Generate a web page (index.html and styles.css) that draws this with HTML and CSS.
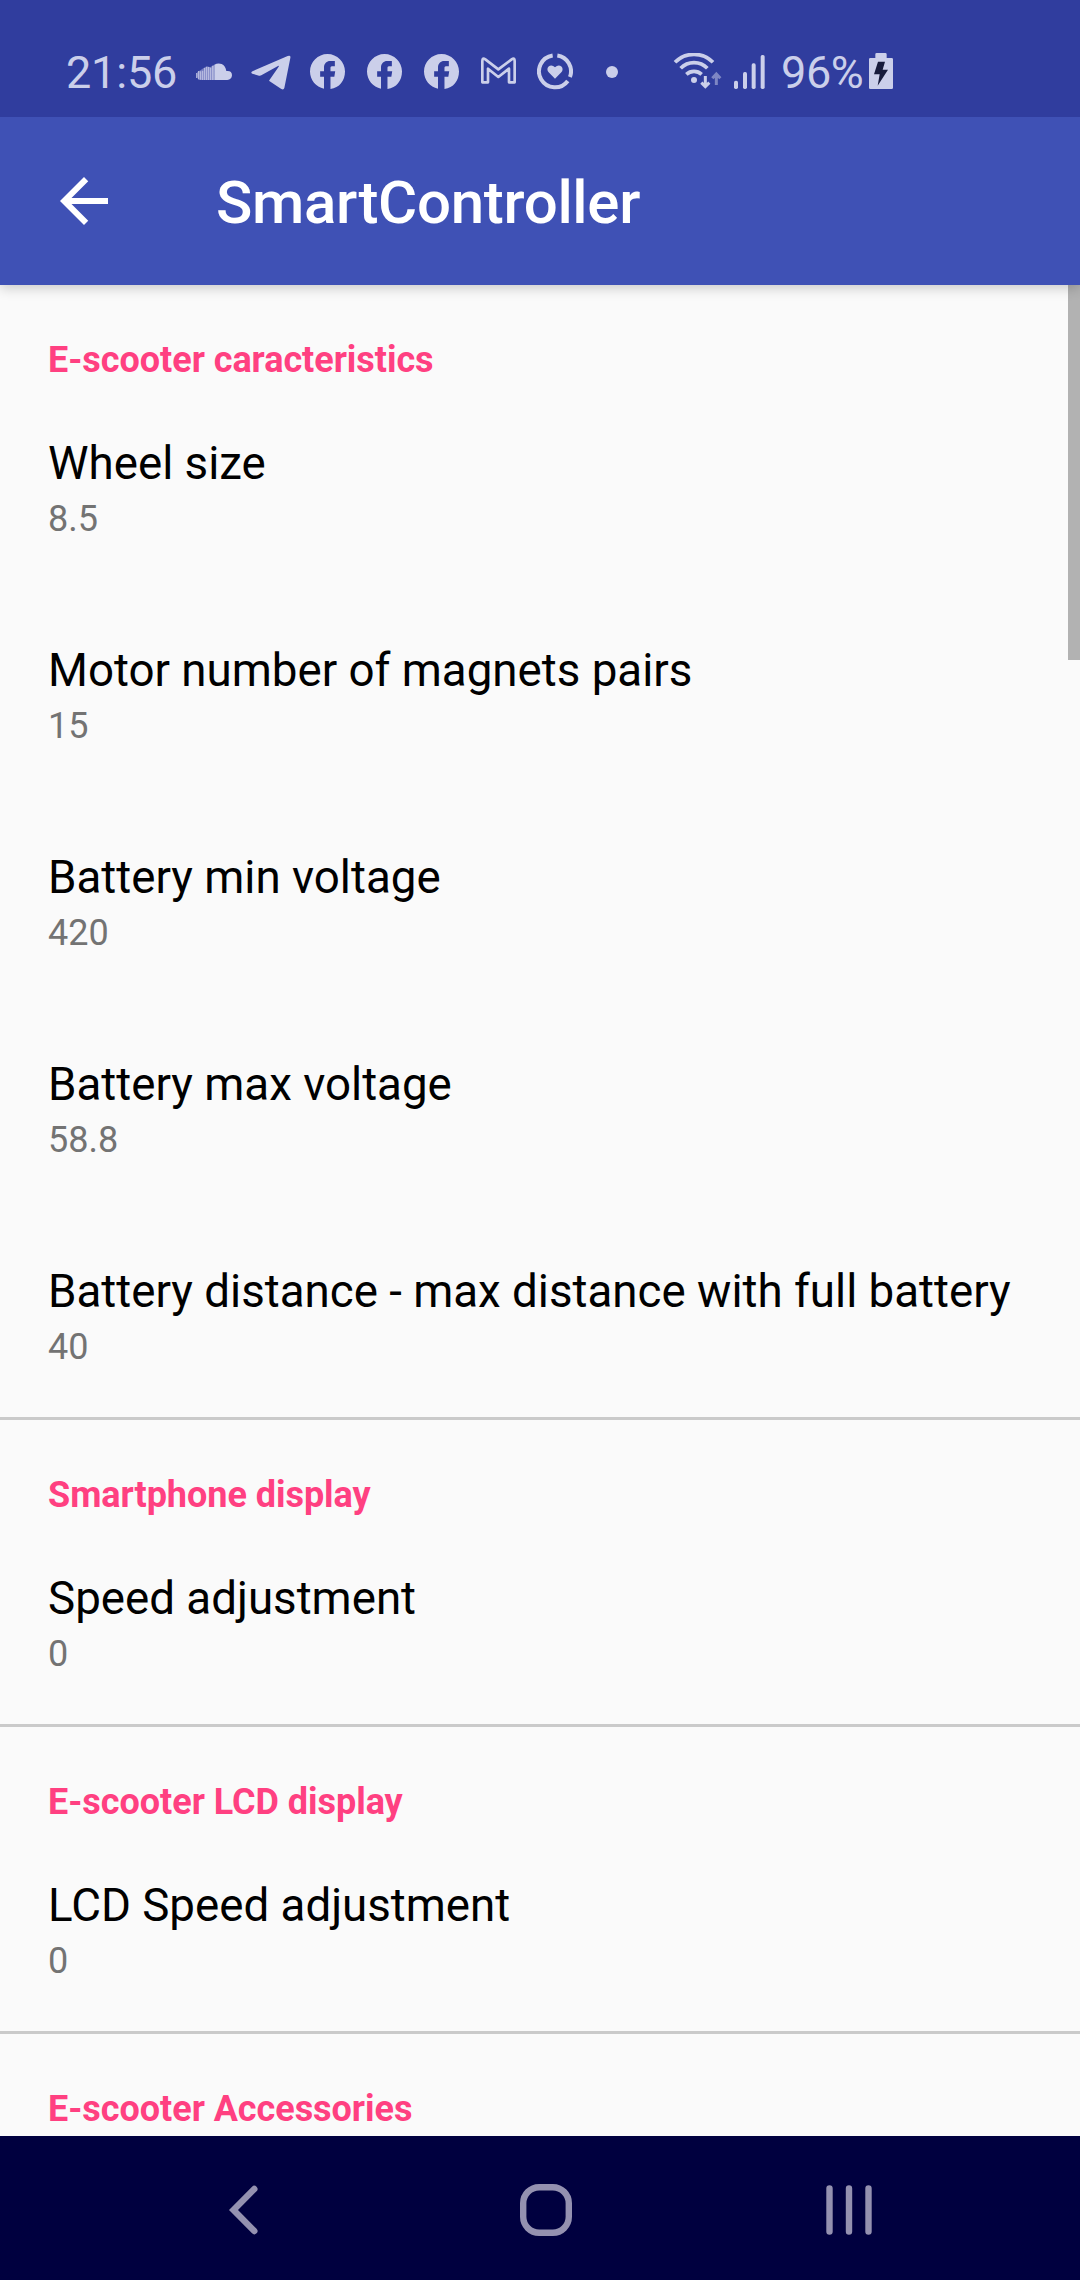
FILE: index.html
```html
<!DOCTYPE html>
<html lang="en">
<head>
<meta charset="utf-8">
<title>SmartController</title>
<link rel="stylesheet" href="styles.css">
</head>
<body>
<svg class="defs" width="0" height="0" aria-hidden="true">
  <symbol id="facebook" viewBox="2 2 20 20"><path d="M22 12c0-5.52-4.48-10-10-10S2 6.480 2 12c0 4.840 3.440 8.870 8 9.800V15H7.800v-3.200h2.200V9.500C10 7.570 11.570 6 13.500 6H16.200v3h-1.700c-.55 0-.8.450-.8 1v1.800h2.700l-.5 3.200h-2.200v6.950c5.050-.5 8.300-4.760 8.300-9.950z"/></symbol>
</svg>
<div class="screen">
  <header class="status-bar">
    <span class="clock">21:56</span>
    <svg class="icon soundcloud" width="36" height="37" viewBox="0 0 108 111">
      <path d="M55 35Q66 29 77 33Q88 38 91 54Q108 52 108 67Q107 80 94 81H55z"/>
      <path opacity=".75" d="M0 60h4v15h-4zM6 54h4v25h-4zM12 55h4v25h-4zM18 53h4v28h-4zM24 45h4v36h-4zM30 41h4v40h-4zM36 42h4v39h-4zM42 44h4v37h-4zM48 38h5v43h-5z"/>
      <path opacity=".45" d="M4 57Q16 50 24 44Q34 38 42 43L55 35V81H10Q0 77 4 57z"/>
    </svg>
    <svg class="icon telegram" width="40" height="37" viewBox="0 0 120 111">
      <path d="M1 60Q0 56 6 54L110 9Q120 6 118 15L100 105Q98 112 91 108L56 85Q53 83 56 80L83 41Q85 37 81 39L31 67Q28 69 24 68L4 62z"/>
    </svg>
    <svg class="icon fb-first" width="35" height="35"><use href="#facebook"/></svg>
    <svg class="icon fb" width="35" height="35"><use href="#facebook"/></svg>
    <svg class="icon fb" width="35" height="35"><use href="#facebook"/></svg>
    <svg class="icon gmail" width="35" height="37" viewBox="0 0 105 111">
      <path class="line" stroke-width="8" stroke-linejoin="round" d="M4 88V24Q4 13 13 19L52 49L92 19Q101 13 101 24V88H84V47L52 72L21 47V88z"/>
    </svg>
    <svg class="icon wellbeing" width="36" height="37" viewBox="0 0 108 111">
      <path class="line" stroke-width="12" d="M61 7.500A48 48 0 0 1 98.800 72.200M92.300 83.900A48 48 0 1 1 47 7.500"/>
      <path d="M54 77L35 58Q28 49 34 41Q44 33 54 43Q64 33 74 41Q80 49 73 58z"/>
    </svg>
    <svg class="icon more" width="12" height="12" viewBox="0 0 12 12"><circle cx="6" cy="6" r="6"/></svg>
    <svg class="icon wifi" width="49" height="37" viewBox="0 0 147 111">
      <g class="line" stroke-width="11">
        <path d="M6 28A79.700 79.700 0 0 1 120 28"/>
        <path d="M23 46A55 55 0 0 1 103 46"/>
        <path d="M40 64A34 34 0 0 1 86 64"/>
      </g>
      <circle cx="63" cy="81" r="9"/>
      <path class="line" stroke-width="9" d="M97 69V101M85 89L97 101L109 89"/>
      <path class="line" stroke-width="9" opacity=".5" d="M130 96V63M118 76L130 63L142 76"/>
    </svg>
    <svg class="icon signal" width="31" height="37" viewBox="0 0 93 111">
      <rect x="0" y="83" width="12" height="25" rx="5"/><rect x="27" y="57" width="12" height="51" rx="5"/><rect x="53" y="31" width="12" height="77" rx="5"/><rect x="80" y="6" width="12" height="102" rx="5"/>
    </svg>
    <span class="percent">96%</span>
    <svg class="icon battery" width="24" height="37" viewBox="0 0 72 111">
      <path d="M19 4Q19 0 23 0H49Q53 0 53 4V15H68Q72 15 72 19V104Q72 108 68 108H4Q0 108 0 104V19Q0 15 4 15H19z"/>
      <path class="bolt" d="M27 26H48L41 50H57L26 98L32 64H15z"/>
    </svg>
  </header>

  <div class="app-bar">
    <svg class="back" width="72" height="72" viewBox="0 0 24 24"><path d="M20 11H7.830l5.590-5.590L12 4l-8 8 8 8 1.410-1.410L7.830 13H20z"/></svg>
    <h1 class="app-title">SmartController</h1>
  </div>

  <main class="settings">
    <section class="group">
      <h2 class="category">E-scooter caracteristics</h2>
      <div class="item"><div class="title">Wheel size</div><div class="summary">8.5</div></div>
      <div class="item"><div class="title">Motor number of magnets pairs</div><div class="summary">15</div></div>
      <div class="item"><div class="title">Battery min voltage</div><div class="summary">420</div></div>
      <div class="item"><div class="title">Battery max voltage</div><div class="summary">58.8</div></div>
      <div class="item"><div class="title">Battery distance - max distance with full battery</div><div class="summary">40</div></div>
    </section>
    <section class="group">
      <h2 class="category">Smartphone display</h2>
      <div class="item"><div class="title">Speed adjustment</div><div class="summary">0</div></div>
    </section>
    <section class="group">
      <h2 class="category">E-scooter LCD display</h2>
      <div class="item"><div class="title">LCD Speed adjustment</div><div class="summary">0</div></div>
    </section>
    <section class="group">
      <h2 class="category">E-scooter Accessories</h2>
    </section>
    <div class="scrollbar"></div>
  </main>

  <nav class="nav-bar">
    <svg width="52" height="52" viewBox="0 0 52 52"><path d="M37.300 5L16.500 26L37.300 47"/></svg>
    <svg width="52" height="52" viewBox="0 0 52 52"><rect x="3.200" y="3.200" width="45.600" height="45.600" rx="16"/></svg>
    <svg width="52" height="52" viewBox="0 0 52 52"><path d="M6.500 4.500V47.500M26 4.500V47.500M45.500 4.500V47.500"/></svg>
  </nav>
</div>
</body>
</html>
```
FILE: styles.css
```css
* {
  box-sizing: border-box;
}

body {
  margin: 0;
  font-family: Roboto, "Liberation Sans", sans-serif;
  background: #fafafa;
}

h1, h2 {
  margin: 0;
}

.defs {
  display: none;
}

.screen {
  display: flex;
  flex-direction: column;
  width: 1080px;
  height: 2280px;
  overflow: hidden;
}

/* Status bar */
.status-bar {
  display: flex;
  align-items: center;
  height: 117px;
  padding: 26px 0 0 66px;
  background: #303d9e;
  color: #cbcfea;
  font-size: 45px;
  line-height: 54px;
  white-space: nowrap;
}

.icon {
  flex: none;
  fill: #cbcfea;
}

.line {
  fill: none;
  stroke: #cbcfea;
}

.bolt {
  fill: #171b3c;
}

.clock {
  width: 130px;
  padding-top: 2px;
  letter-spacing: -0.2px;
}

.telegram { margin-left: 19px; }
.fb-first { margin-left: 19px; }
.fb { margin-left: 22px; }
.gmail { margin-left: 22px; }
.wellbeing { margin-left: 21px; }
.more { margin-left: 33px; }
.wifi { margin-left: 55px; }
.signal { margin-left: 12px; }

.percent {
  width: 88px;
  margin-left: 16px;
  padding-top: 2px;
  letter-spacing: -0.4px;
}

/* App bar */
.app-bar {
  display: flex;
  align-items: center;
  flex: none;
  position: relative;
  z-index: 1;
  height: 168px;
  padding-left: 48px;
  background: #3f51b5;
  box-shadow: 0 3px 12px rgba(0, 0, 0, 0.2);
  clip-path: inset(0 0 -24px 0);
}

.back {
  fill: #fff;
}

.app-title {
  margin-left: 96px;
  padding-top: 4px;
  font-size: 60px;
  font-weight: 500;
  line-height: 72px;
  letter-spacing: -0.3px;
  color: #fff;
}

/* Preference list */
.settings {
  position: relative;
  flex: none;
  height: 1851px;
  overflow: hidden;
  background: #fafafa;
}

.group + .group {
  border-top: 3px solid #cacaca;
}

.category {
  height: 97px;
  padding: 54px 48px 0;
  font-size: 36px;
  font-weight: 700;
  line-height: 42px;
  letter-spacing: -0.04px;
  color: #ff4081;
}

.item {
  height: 207px;
  padding: 55px 48px 0;
}

.title {
  font-size: 45.7px;
  line-height: 54px;
  color: #000;
  white-space: nowrap;
}

.summary {
  margin-top: 7px;
  font-size: 36px;
  line-height: 42px;
  color: #737373;
}

.scrollbar {
  position: absolute;
  top: 0;
  right: 0;
  width: 12px;
  height: 375px;
  background: #b2b2b2;
}

/* Navigation bar */
.nav-bar {
  display: grid;
  flex: none;
  grid-template-columns: repeat(3, 303px);
  place-items: center;
  height: 144px;
  padding: 4px 0 0 91.5px;
  background: #00003f;
}

.nav-bar svg {
  fill: none;
  stroke: #9491b0;
  stroke-width: 6.4;
  stroke-linecap: round;
}
```
